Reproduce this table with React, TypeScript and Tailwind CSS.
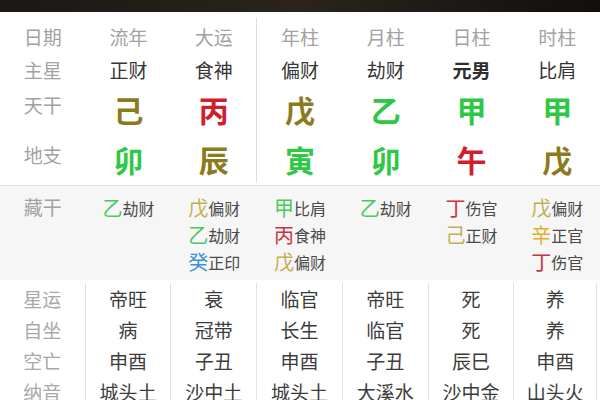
import React from "react";

const FONT = { fontFamily: '"Noto Sans CJK SC", "Noto Sans", sans-serif' };

const cols = [
  { head: "流年", star: "正财", gan: { t: "己", c: "text-[#8c7a1e]" }, zhi: { t: "卯", c: "text-[#2ec845]" } },
  { head: "大运", star: "食神", gan: { t: "丙", c: "text-[#d01e2c]" }, zhi: { t: "辰", c: "text-[#8c7a1e]" } },
  { head: "年柱", star: "偏财", gan: { t: "戊", c: "text-[#8c7a1e]" }, zhi: { t: "寅", c: "text-[#2ec845]" } },
  { head: "月柱", star: "劫财", gan: { t: "乙", c: "text-[#2ec845]" }, zhi: { t: "卯", c: "text-[#2ec845]" } },
  { head: "日柱", star: "元男", gan: { t: "甲", c: "text-[#2ec845]" }, zhi: { t: "午", c: "text-[#d01e2c]" } },
  { head: "时柱", star: "比肩", gan: { t: "甲", c: "text-[#2ec845]" }, zhi: { t: "戊", c: "text-[#8c7a1e]" } },
];

const Y = "text-[#c2b055]";
const G = "text-[#4cc860]";
const B = "text-[#3f8ed8]";
const R = "text-[#c83442]";
const GOLD = "text-[#e4ae2c]";

const canggan: { s: string; c: string; n: string }[][] = [
  [{ s: "乙", c: G, n: "劫财" }],
  [
    { s: "戊", c: Y, n: "偏财" },
    { s: "乙", c: G, n: "劫财" },
    { s: "癸", c: B, n: "正印" },
  ],
  [
    { s: "甲", c: G, n: "比肩" },
    { s: "丙", c: R, n: "食神" },
    { s: "戊", c: Y, n: "偏财" },
  ],
  [{ s: "乙", c: G, n: "劫财" }],
  [
    { s: "丁", c: R, n: "伤官" },
    { s: "己", c: Y, n: "正财" },
  ],
  [
    { s: "戊", c: Y, n: "偏财" },
    { s: "辛", c: GOLD, n: "正官" },
    { s: "丁", c: R, n: "伤官" },
  ],
];

const bottomLabels = ["星运", "自坐", "空亡", "纳音"];
const bottom = [
  ["帝旺", "病", "申酉", "城头土"],
  ["衰", "冠带", "子丑", "沙中土"],
  ["临官", "长生", "申酉", "城头土"],
  ["帝旺", "临官", "子丑", "大溪水"],
  ["死", "死", "辰巳", "沙中金"],
  ["养", "养", "申酉", "山头火"],
];

export default function App() {
  return (
    <div className="w-[600px] h-[400px] overflow-hidden bg-white" style={FONT}>
      <div className="h-[12px] bg-gradient-to-r from-[#1c1713] via-[#2a241d] to-[#120f0c]" />

      {/* top section */}
      <div className="grid grid-cols-7 pt-[6px] pb-[2px]">
        <div className="flex flex-col text-[19px] text-[#a2a2a2]">
          <div className="h-[39px] flex items-center justify-center">日期</div>
          <div className="h-[26px] flex items-center justify-center">主星</div>
          <div className="h-[50px] flex items-start justify-center pt-[12px] leading-none">天干</div>
          <div className="h-[50px] flex items-start justify-center pt-[12px] leading-none">地支</div>
        </div>
        {cols.map((c, i) => (
          <div key={i} className={`flex flex-col ${i === 1 ? "border-r border-[#dedede]" : ""}`}>
            <div className="h-[39px] flex items-center justify-center text-[19px] text-[#a2a2a2]">{c.head}</div>
            <div
              className={`h-[26px] flex items-center justify-center text-[19px] ${
                i === 4 ? "text-[#2e2e2e] font-bold" : "text-[#363636]"
              }`}
            >
              {c.star}
            </div>
            <div className={`h-[50px] flex items-center justify-center text-[30px] font-bold leading-none ${c.gan.c}`}>
              <span className="translate-y-[1px]">{c.gan.t}</span>
            </div>
            <div className={`h-[50px] flex items-center justify-center text-[30px] font-bold leading-none ${c.zhi.c}`}>
              <span className="translate-y-[1px]">{c.zhi.t}</span>
            </div>
          </div>
        ))}
      </div>

      {/* canggan */}
      <div className="grid grid-cols-7 bg-[#f6f6f6] border-t border-[#e4e4e4] h-[95px] pt-[8px]">
        <div className="flex flex-col">
          <div className="h-[27px] flex items-center justify-center text-[19px] text-[#a2a2a2]">藏干</div>
        </div>
        {canggan.map((list, i) => (
          <div key={i} className="flex flex-col items-center">
            {list.map((e, j) => (
              <div key={j} className="h-[27px] flex items-center">
                <span className={`text-[20px] leading-none ${e.c}`}>{e.s}</span>
                <span className="text-[16px] leading-none text-[#4a4a4a]">{e.n}</span>
              </div>
            ))}
          </div>
        ))}
      </div>

      {/* bottom */}
      <div className="grid grid-cols-7 pt-[3px]">
        <div className="flex flex-col border-r border-[#e2e2e2] pt-[1px]">
          {bottomLabels.map((l) => (
            <div key={l} className="h-[31px] flex items-center justify-center text-[19px] text-[#a8a8a8]">
              {l}
            </div>
          ))}
        </div>
        {bottom.map((col, i) => (
          <div key={i} className={`flex flex-col pt-[1px] ${i === 5 ? "mr-[3px] border-r" : "border-r"} border-[#e2e2e2]`}>
            {col.map((v, j) => (
              <div key={j} className="h-[31px] flex items-center justify-center text-[19px] text-[#3c3c3c]">
                {v}
              </div>
            ))}
          </div>
        ))}
      </div>
    </div>
  );
}
